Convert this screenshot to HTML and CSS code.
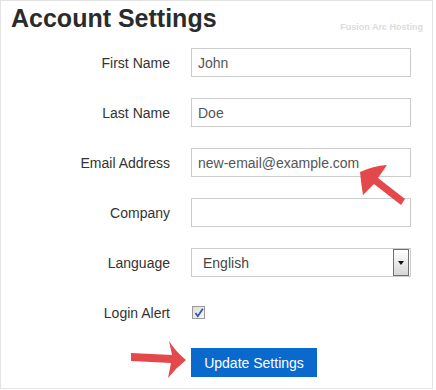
FILE: index.html
```html
<!DOCTYPE html>
<html>
<head>
<meta charset="utf-8">
<link rel="stylesheet" href="styles.css">
</head>
<body>
<div class="panel">
  <div class="header">
    <h1 class="title">Account Settings</h1>
    <span class="brand">Fusion Arc Hosting</span>
  </div>
  <form class="form">
    <label class="label">First Name</label>
    <input class="field" type="text" value="John">
    <label class="label">Last Name</label>
    <input class="field" type="text" value="Doe">
    <label class="label">Email Address</label>
    <input class="field" type="text" value="new-email@example.com">
    <label class="label">Company</label>
    <input class="field" type="text" value="">
    <label class="label">Language</label>
    <div class="select">
      <span class="select-value">English</span>
      <span class="select-btn"><span class="tri"></span></span>
    </div>
    <label class="label">Login Alert</label>
    <div class="check-cell">
      <span class="checkbox">
        <svg width="10" height="10" viewBox="0 0 10 10"><path d="M1.5 5 L3.8 8.2 L8.8 0.8" fill="none" stroke="#3557b8" stroke-width="1.8"/></svg>
      </span>
    </div>
    <span class="label"></span>
    <div class="btn-cell"><button class="btn" type="button">Update Settings</button></div>
  </form>
  <svg class="arrows" width="436" height="390" viewBox="0 0 436 390">
    <path d="M360,172 Q373,166 387,165 L378,178 L405,199 L401,205 L374,184 L363,195 Q361,183 360,172 Z" fill="#e5484b"/>
    <path d="M131,353 L172,355 L169,341 Q176,352 186,360 Q176,368 168,378 L171,363 L131,361 Z" fill="#e5484b"/>
  </svg>
</div>
</body>
</html>
```
FILE: styles.css
```css
html, body {
  margin: 0;
  padding: 0;
  background: #ffffff;
}
body {
  font-family: "Liberation Sans", Arial, sans-serif;
}
.panel {
  position: relative;
  box-sizing: border-box;
  width: 433px;
  height: 389px;
  border: 1px solid #e3e3e3;
}
.header {
  display: flex;
  justify-content: space-between;
  align-items: flex-start;
  padding: 3px 9px 0 10px;
}
.title {
  margin: 0;
  font-size: 25px;
  line-height: 28px;
  font-weight: bold;
  color: #2b2b2b;
}
.brand {
  margin-top: 19px;
  font-size: 9px;
  line-height: 9px;
  font-weight: bold;
  color: #dcdcdc;
}
.form {
  display: grid;
  grid-template-columns: 169px 220px;
  grid-auto-rows: 29px;
  column-gap: 21px;
  row-gap: 21px;
  margin: 16px 0 0 0;
}
.label {
  display: flex;
  align-items: center;
  justify-content: flex-end;
  font-size: 14px;
  color: #333333;
}
.field {
  box-sizing: border-box;
  width: 220px;
  height: 29px;
  margin: 0;
  border: 1px solid #cccccc;
  padding: 0 6px;
  font-family: "Liberation Sans", Arial, sans-serif;
  font-size: 14px;
  color: #555555;
  background: #ffffff;
  outline: none;
}
.select {
  box-sizing: border-box;
  display: flex;
  align-items: center;
  justify-content: space-between;
  height: 29px;
  border: 1px solid #cccccc;
  padding: 0 1px 0 11px;
}
.select-value {
  font-size: 14px;
  color: #444444;
}
.select-btn {
  box-sizing: border-box;
  display: flex;
  align-items: center;
  justify-content: center;
  width: 16px;
  height: 27px;
  border: 1px solid #707070;
  background: linear-gradient(#ffffff, #d6d6d6);
}
.tri {
  width: 0;
  height: 0;
  border-left: 3px solid transparent;
  border-right: 3px solid transparent;
  border-top: 4px solid #111111;
}
.check-cell {
  display: flex;
  align-items: center;
}
.checkbox {
  box-sizing: border-box;
  display: flex;
  align-items: center;
  justify-content: center;
  width: 13px;
  height: 13px;
  margin-left: 1px;
  border: 1px solid #9a9a9a;
  background: linear-gradient(135deg, #dcdcdc, #f8f8f8);
}
.btn-cell {
  display: flex;
}
.btn {
  width: 126px;
  height: 29px;
  margin: 0;
  border: none;
  padding: 0;
  background: #0a69cc;
  color: #ffffff;
  font-family: "Liberation Sans", Arial, sans-serif;
  font-size: 14px;
}
.arrows {
  position: absolute;
  left: -1px;
  top: -1px;
  pointer-events: none;
}
```
